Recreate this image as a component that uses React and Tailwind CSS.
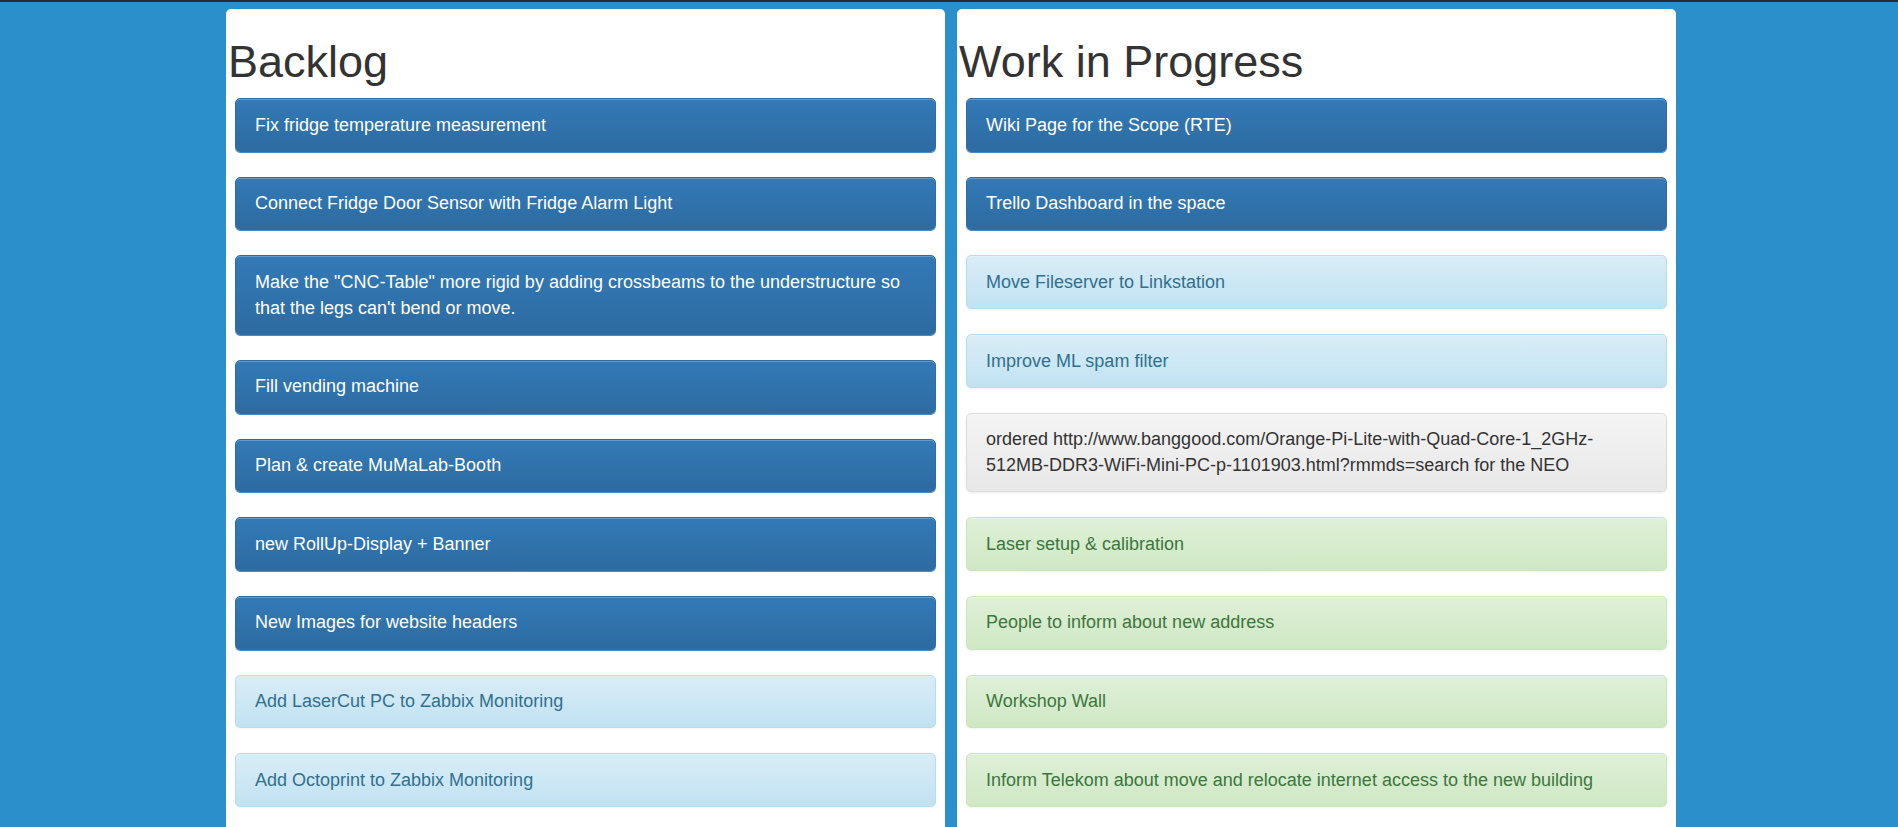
import React from "react";

const backlog = [
  { t: "Fix fridge temperature measurement", k: "primary" },
  { t: "Connect Fridge Door Sensor with Fridge Alarm Light", k: "primary" },
  { t: "Make the \"CNC-Table\" more rigid by adding crossbeams to the understructure so that the legs can't bend or move.", k: "primary" },
  { t: "Fill vending machine", k: "primary" },
  { t: "Plan & create MuMaLab-Booth", k: "primary" },
  { t: "new RollUp-Display + Banner", k: "primary" },
  { t: "New Images for website headers", k: "primary" },
  { t: "Add LaserCut PC to Zabbix Monitoring", k: "info" },
  { t: "Add Octoprint to Zabbix Monitoring", k: "info" },
];

const wip = [
  { t: "Wiki Page for the Scope (RTE)", k: "primary" },
  { t: "Trello Dashboard in the space", k: "primary" },
  { t: "Move Fileserver to Linkstation", k: "info" },
  { t: "Improve ML spam filter", k: "info" },
  { t: "ordered http://www.banggood.com/Orange-Pi-Lite-with-Quad-Core-1_2GHz-512MB-DDR3-WiFi-Mini-PC-p-1101903.html?rmmds=search for the NEO", k: "default" },
  { t: "Laser setup & calibration", k: "success" },
  { t: "People to inform about new address", k: "success" },
  { t: "Workshop Wall", k: "success" },
  { t: "Inform Telekom about move and relocate internet access to the new building", k: "success" },
];

const styles = {
  primary:
    "text-white border-[#2e6da4] bg-gradient-to-b from-[#337ab7] to-[#2d6ba1] shadow-[inset_0_1px_0_rgba(255,255,255,0.25),0_1px_0_#4a8cc6]",
  info:
    "text-[#31708f] border-[#b4def0] bg-gradient-to-b from-[#d9edf7] to-[#c1e2f2] shadow-[inset_0_1px_0_rgba(255,255,255,0.25),0_1px_2px_rgba(0,0,0,0.05)]",
  success:
    "text-[#3c763d] border-[#c7e6b9] bg-gradient-to-b from-[#dff0d8] to-[#cfe8c4] shadow-[inset_0_1px_0_rgba(255,255,255,0.25),0_1px_2px_rgba(0,0,0,0.05)]",
  default:
    "text-[#333333] border-[#dcdcdc] bg-gradient-to-b from-[#f4f4f4] to-[#e8e8e8] shadow-[inset_0_1px_0_rgba(255,255,255,0.25),0_1px_2px_rgba(0,0,0,0.08)]",
};

function Card({ t, k }) {
  return (
    <div
      className={`mx-[9px] mb-[25px] rounded-[5px] border px-[19px] pt-[13.5px] pb-[12.5px] text-[18px] leading-[25.7px] ${styles[k]}`}
    >
      {t}
    </div>
  );
}

function Panel({ title, items }) {
  return (
    <div className="w-[719px] rounded-t-[5px] bg-white pt-[28px] pb-[10px]">
      <h1 className="pl-[2px] text-[45px] leading-[49.5px] mb-[11.5px] font-normal text-[#333333]">
        {title}
      </h1>
      {items.map((it, i) => (
        <Card key={i} {...it} />
      ))}
    </div>
  );
}

export default function App() {
  return (
    <div
      className="min-h-[827px] bg-[#2a8fcb] border-t-2 border-[#2b2b2b] pt-[7px]"
      style={{ fontFamily: '"Liberation Sans", Arial, Helvetica, sans-serif' }}
    >
      <div className="flex justify-center gap-[12px] pl-[4px]">
        <Panel title="Backlog" items={backlog} />
        <Panel title="Work in Progress" items={wip} />
      </div>
    </div>
  );
}
